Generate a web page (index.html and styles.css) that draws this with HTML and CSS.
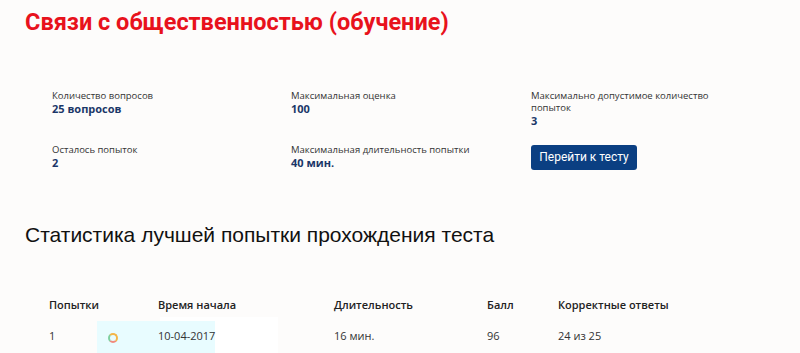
FILE: index.html
```html
<!DOCTYPE html>
<html lang="ru">

<head>
  <meta charset="UTF-8">
  <meta name="viewport" content="width=device-width, initial-scale=1.0">
  <title>Связи с общественностью (обучение)</title>
  <link rel="stylesheet" href="styles.css">
</head>

<body>
  <h1 class="title">Связи с общественностью (обучение)</h1>

  <div class="info">
    <div class="item">
      <div class="label">Количество вопросов</div>
      <div class="value">25 вопросов</div>
    </div>
    <div class="item">
      <div class="label">Максимальная оценка</div>
      <div class="value">100</div>
    </div>
    <div class="item">
      <div class="label">Максимально допустимое количество попыток</div>
      <div class="value">3</div>
    </div>
    <div class="item">
      <div class="label">Осталось попыток</div>
      <div class="value">2</div>
    </div>
    <div class="item">
      <div class="label">Максимальная длительность попытки</div>
      <div class="value">40 мин.</div>
    </div>
    <div class="item">
      <a class="btn-test" href="#">Перейти к тесту</a>
    </div>
  </div>

  <h2 class="stats-title">Статистика лучшей попытки прохождения теста</h2>

  <div class="stats">
    <div class="overlay">
      <span class="overlay-icon"></span>
    </div>
    <table class="stats-table">
      <thead>
        <tr>
          <th>Попытки</th>
          <th>Время начала</th>
          <th>Длительность</th>
          <th>Балл</th>
          <th>Корректные ответы</th>
        </tr>
      </thead>
      <tbody>
        <tr>
          <td>1</td>
          <td>10-04-2017</td>
          <td>16 мин.</td>
          <td>96</td>
          <td>24 из 25</td>
        </tr>
      </tbody>
    </table>
  </div>
</body>

</html>
```

FILE: styles.css
```css
* {
  margin: 0;
  padding: 0;
  box-sizing: border-box;
}

body {
  background-color: #fdfcfb;
  font-family: "Open Sans", "Noto Sans", sans-serif;
  color: #222;
  overflow: hidden;
}

.title {
  font-family: Roboto, "Noto Sans", sans-serif;
  font-weight: 700;
  font-size: 23.5px;
  line-height: 28px;
  color: #e8121c;
  padding: 8px 0 0 25px;
}

.info {
  display: grid;
  grid-template-columns: 239px 240px 240px;
  row-gap: 17px;
  padding: 54px 0 0 52px;
}

.item {
  max-width: 180px;
}

.label {
  font-size: 9.5px;
  line-height: 12px;
  color: #333;
}

.value {
  font-size: 11px;
  line-height: 13px;
  font-weight: 700;
  color: #1b3768;
}

.btn-test {
  display: inline-block;
  width: 106px;
  height: 25px;
  line-height: 25px;
  text-align: center;
  background-color: #0b3f82;
  border-radius: 3px;
  color: #fff;
  font-family: Roboto, sans-serif;
  font-size: 12px;
  text-decoration: none;
}

.stats-title {
  font-family: "Liberation Sans", Arial, sans-serif;
  font-weight: 400;
  font-size: 21px;
  line-height: 24px;
  color: #111;
  padding: 53px 0 0 25px;
}

.stats {
  position: relative;
  margin-top: 49px;
}

.overlay {
  position: absolute;
  left: 97px;
  top: 25px;
  width: 118px;
  height: 40px;
  background-color: #e8fcff;
  box-shadow: 63px -4px 0 0 #fff;
}

.overlay-icon {
  position: absolute;
  left: 11px;
  top: 12px;
  width: 10px;
  height: 10px;
  border-radius: 50%;
  border: 2px solid #f4b64a;
  border-left-color: #7fd0a0;
  border-bottom-color: #f08a7e;
}

.stats-table {
  position: relative;
  border-collapse: collapse;
  margin-left: 49px;
  font-size: 11px;
}

.stats-table th {
  font-weight: 600;
  text-align: left;
  height: 18px;
  line-height: 18px;
  color: #222;
}

.stats-table td {
  vertical-align: top;
  line-height: 14px;
  padding: 15px 0 14px;
  color: #333;
}

.stats-table th:nth-child(1) {
  width: 109px;
}

.stats-table th:nth-child(2) {
  width: 176px;
}

.stats-table th:nth-child(3) {
  width: 153px;
}

.stats-table th:nth-child(4) {
  width: 71px;
}
```
